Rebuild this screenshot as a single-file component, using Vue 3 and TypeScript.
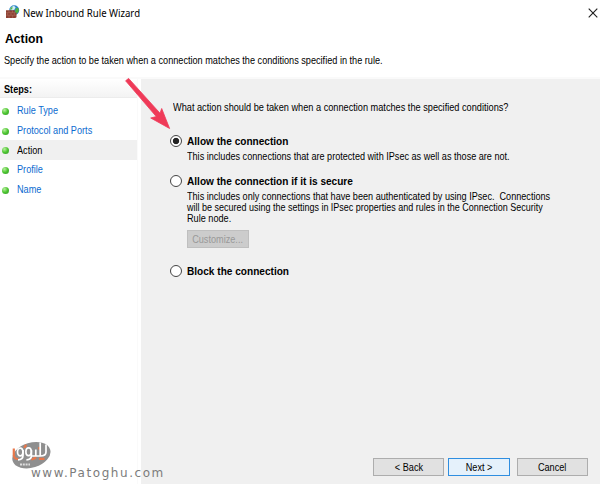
<script setup lang="ts">
import { ref } from 'vue'

const steps: string[] = ['Rule Type', 'Protocol and Ports', 'Action', 'Profile', 'Name']
const current = ref('Action')
const choice = ref<'allow' | 'secure' | 'block'>('allow')
</script>

<template>
  <div class="window">
    <header class="titlebar">
      <svg class="app-icon" width="14" height="14" viewBox="0 0 14 14">
        <circle cx="8.2" cy="5.2" r="5" fill="#2f86c8" />
        <path d="M5 2.2 8 .8l1.6 1.7-1.3 2.2-2.8.8-1.2-1z" fill="#d2f0f2" />
        <path d="M9.8 3.5l2.5-.8.5 3.6-2 2.8-1.8-2.4z" fill="#4fb33d" />
        <path d="M4 4.5l1-2 1.5-.7-.3 2.7z" fill="#5bb548" />
        <path d="M0 5.3h8.8v2.2h1.7v4.8L9.3 13H0z" fill="#8d4032" />
        <path d="M0 7.7h9M0 10.2h10M3 5.3v2.4M6.5 5.3v2.4M1.7 7.7v2.5M5 7.7v2.5M8.3 7.7v2.5M3 10.2V13M6.6 10.2V13" stroke="#bd8070" stroke-width=".4" />
      </svg>
      <span class="title">New Inbound Rule Wizard</span>
      <svg class="close" width="10" height="10" viewBox="0 0 10 10"><path d="M.7.7l8.6 8.6M9.3.7L.7 9.3" stroke="#222" stroke-width="1.15" /></svg>
    </header>
    <section class="heading">
      <h1>Action</h1>
      <p><span class="narrow">Specify the action to be taken when a connection matches the conditions specified in the rule.</span></p>
    </section>
    <div class="body">
      <aside>
        <div class="steps-head"><span class="narrow">Steps:</span></div>
        <ul>
          <li v-for="s in steps" :key="s" :class="{ current: s === current }" @click="current = s">
            <i class="dot"></i><span class="narrow">{{ s }}</span>
          </li>
        </ul>
      </aside>
      <main>
        <p class="question"><span class="narrow">What action should be taken when a connection matches the specified conditions?</span></p>
        <div class="option first" @click="choice = 'allow'">
          <i class="radio" :class="{ on: choice === 'allow' }"></i>
          <div class="copy">
            <b>Allow the connection</b>
            <p><span class="narrow line-a">This includes connections that are protected with IPsec as well as those are not.</span></p>
          </div>
        </div>
        <div class="option second" @click="choice = 'secure'">
          <i class="radio" :class="{ on: choice === 'secure' }"></i>
          <div class="copy">
            <b>Allow the connection if it is secure</b>
            <p>
              <span class="narrow line-a">This includes only connections that have been authenticated by using IPsec.&nbsp; Connections</span>
              <span class="narrow line-b">will be secured using the settings in IPsec properties and rules in the Connection Security</span>
              <span class="narrow">Rule node.</span>
            </p>
            <button class="customize" disabled><span class="narrow">Customize...</span></button>
          </div>
        </div>
        <div class="option third" @click="choice = 'block'">
          <i class="radio" :class="{ on: choice === 'block' }"></i>
          <div class="copy"><b>Block the connection</b></div>
        </div>
        <footer>
          <button class="back"><span class="narrow">&lt; Back</span></button>
          <button class="next"><span class="narrow">Next &gt;</span></button>
          <button class="cancel"><span class="narrow">Cancel</span></button>
        </footer>
      </main>
    </div>
    <svg class="arrow" width="54" height="56" viewBox="0 0 54 56">
      <path d="M1.6 3.8 4.6 1.4 36 36.2 37.7 31.5 45.6 51.5 26.7 41 32.3 39.6z" fill="#ef3a58" stroke="#ef3a58" stroke-width=".8" stroke-linejoin="round" />
    </svg>
    <div class="watermark">
      <svg class="logo" width="42" height="32" viewBox="0 0 42 32">
        <ellipse cx="20.4" cy="15.2" rx="19.6" ry="12.4" transform="rotate(-17 20.4 15.2)" fill="#8f8f8f" />
        <path d="M2.8 8.5v6.5q0 4 4.4 4M28 18.9h5.5M28.3 7v2.6M20.5 19.3q3-.2 4.5-2M13.5 8q.3-2 2-3" fill="none" stroke="#e8774a" stroke-width="2.2" />
        <g fill="none" stroke="#fff" stroke-width="1.7">
          <ellipse cx="9.2" cy="12" rx="2.7" ry="3.9" />
          <path d="M12 10v5.5q0 4.3-5 4.3" />
          <ellipse cx="17.6" cy="11.7" rx="2.7" ry="3.9" />
          <path d="M20.4 10v5.5q0 4.3-5 4.3M20.4 16h4.4V9.5M24.8 16h4.4V2.5M29.2 16q5.8 0 5.8-4V4.5" />
        </g>
        <path d="M9 24.5h10" stroke="#dedede" stroke-width="2" stroke-dasharray="2 .8" />
      </svg>
      <span class="site">www.Patoghu.com</span>
    </div>
  </div>
</template>

<style>
body { margin: 0; background: #fff; }
</style>
<style scoped>
* { box-sizing: border-box; }
p, h1, ul { margin: 0; padding: 0; }
.window { position: relative; width: 600px; height: 484px; overflow: hidden; display: flex; flex-direction: column; background: #fff; color: #000; font: 11px/11px "Liberation Sans", Arial, sans-serif; white-space: nowrap; }
.narrow { display: inline-block; transform: scaleX(.831); transform-origin: 0 50%; }
.line-a { transform: scaleX(.827); }
.line-b { transform: scaleX(.817); }
.titlebar { height: 24px; display: flex; align-items: center; padding: 1px 2px 0 6px; font: 11px/14px "Noto Sans", sans-serif; flex: none; }
.app-icon { margin-top: -2px; }
.title { margin-left: 3px; transform: scaleX(.873); transform-origin: 0 50%; }
.close { margin-left: auto; }
.heading { height: 53px; flex: none; padding: 8px 4px 0; }
h1 { font-size: 12.2px; line-height: 14px; padding-left: 1px; }
.heading p { margin-top: 8px; line-height: 12px; }
.body { flex: 1; display: flex; border-top: 2px solid #fafafa; }
aside { width: 138px; flex: none; margin-right: 3px; border-right: 1px solid #fafafa; }
.steps-head { height: 19px; padding: 5px 4px 0; background: linear-gradient(#fff, #f3f3f3); border-bottom: 1px solid #ececec; font-weight: bold; }
ul { list-style: none; padding-top: 3px; }
li { height: 19.7px; display: flex; align-items: center; color: #0c6bd0; }
li.current { background: #f0f0f0; color: #000; }
.dot { width: 7px; height: 7px; margin: 1px 8px 0 2px; border-radius: 50%; background: radial-gradient(circle at 35% 30%, #b9efa0, #4cc530 50%, #36942c); }
main { flex: 1; min-width: 0; display: flex; flex-direction: column; background: #f0f0f0; padding: 0 12px 8px 28.5px; }
.question { margin: 22px 0 0 3.5px; height: 12px; line-height: 12px; }
.question .narrow { transform: scaleX(.835); }
.option { display: flex; }
.radio { width: 12px; height: 12px; flex: none; border: 1px solid #444; border-radius: 50%; background: #fff; margin-right: 5px; }
.radio.on { background: radial-gradient(circle, #222 0 2.8px, #fff 3.6px); }
.copy { display: flex; flex-direction: column; align-items: flex-start; }
.copy b { line-height: 12px; transform: scaleX(.917); transform-origin: 0 50%; }
.copy p { margin-top: 4px; display: flex; flex-direction: column; align-items: flex-start; }
.first { margin-top: 22px; }
.second { margin-top: 13px; }
.third { margin-top: 17px; }
button { font: inherit; color: #000; border: 1px solid #adadad; background: #e1e1e1; height: 18px; padding: 0; display: flex; align-items: center; justify-content: center; }
button .narrow { transform-origin: 50% 50%; }
.customize { width: 62px; margin: 6px 0 0 .5px; background: #ccc; border-color: #bfbfbf; color: #999; }
footer { margin-top: auto; display: flex; justify-content: flex-end; }
.back { width: 71px; }
.next { width: 62px; margin: 0 7px 0 4px; background: #e5f1fb; border-color: #2f8ee0; }
.cancel { width: 71px; }
.arrow { position: absolute; left: 124px; top: 77px; }
.watermark { position: absolute; left: 11px; top: 440px; display: flex; }
.site { margin: 26px 0 0 -22px; font: 12px/14px "DejaVu Sans", sans-serif; letter-spacing: 1.55px; color: #7c7c7c; }
</style>
